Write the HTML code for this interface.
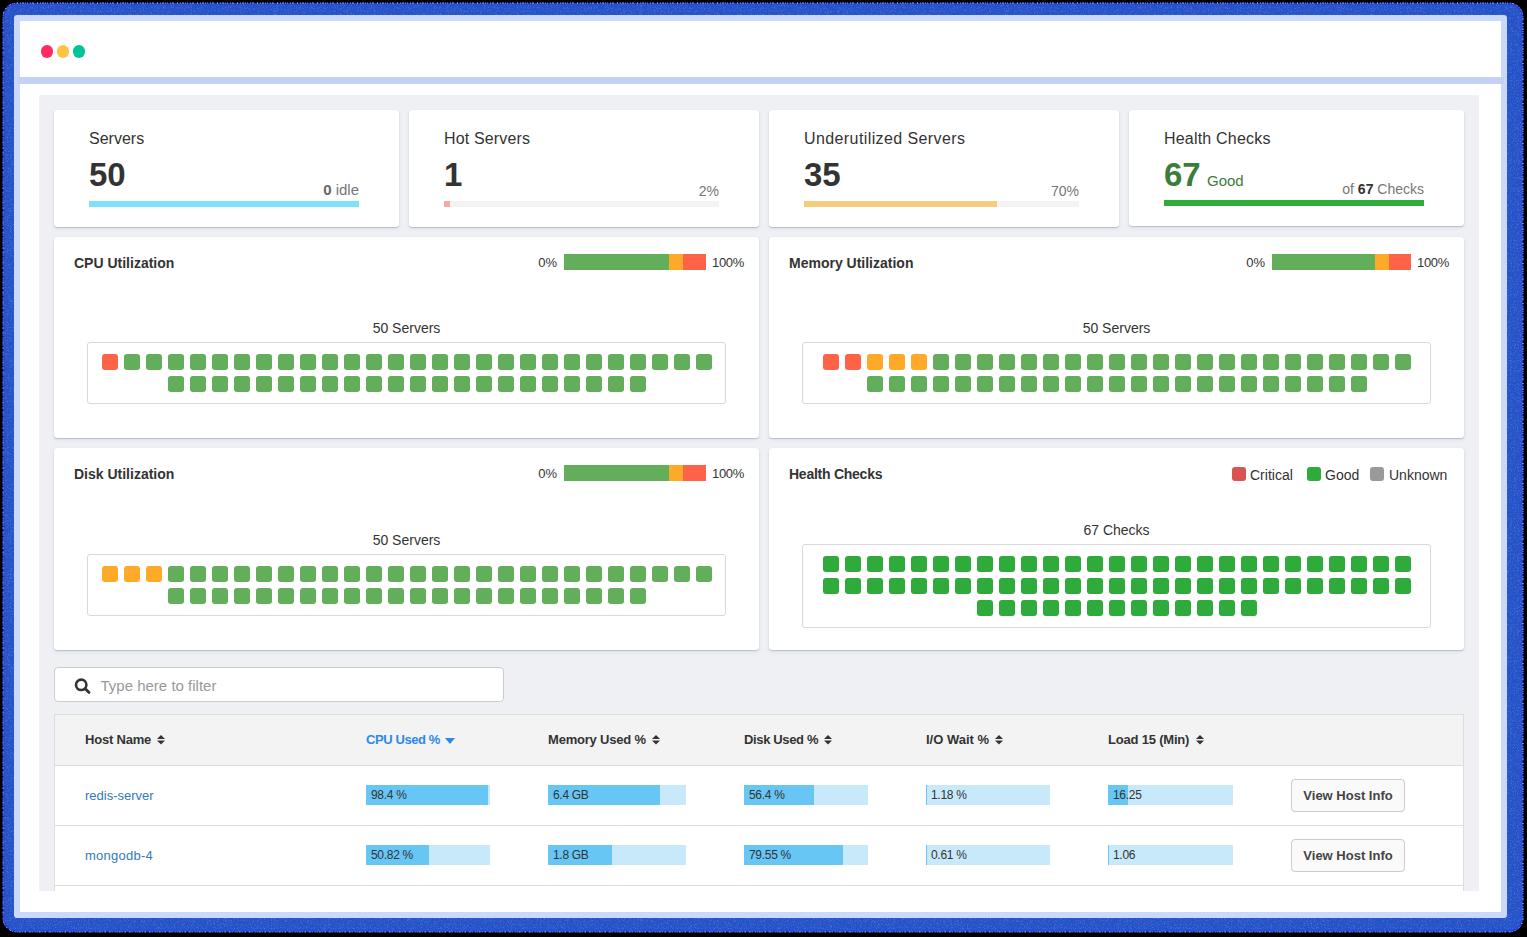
<!DOCTYPE html>
<html><head><meta charset="utf-8"><title>Dashboard</title>
<style>
html,body{margin:0;padding:0;width:1527px;height:937px;overflow:hidden;background:#000;}
body{position:relative;font-family:"Liberation Sans",sans-serif;}
.r,.t,i{position:absolute;}
.t{white-space:nowrap;line-height:1;}
.t b{font-weight:700;}
i{width:16px;height:16px;border-radius:3px;display:block;}
</style></head><body>
<svg class="r" style="left:0;top:0" width="1527" height="937" viewBox="0 0 1527 937"><defs><filter id="nz" x="0" y="0" width="100%" height="100%"><feTurbulence type="turbulence" baseFrequency="0.7" numOctaves="2" seed="7" result="n"/><feColorMatrix in="n" type="matrix" values="0 0 0 0 0.25  0 0 0 0 0.45  0 0 0 0 1  0 0 0 2.2 -0.5"/></filter><filter id="nz2" x="0" y="0" width="100%" height="100%"><feTurbulence type="turbulence" baseFrequency="0.8" numOctaves="2" seed="19" result="n"/><feColorMatrix in="n" type="matrix" values="0 0 0 0 0  0 0 0 0 0.12  0 0 0 0 0.7  0 0 0 2.2 -0.5"/></filter><clipPath id="fc"><rect x="3" y="3" width="1520" height="929" rx="14"/></clipPath></defs><rect x="3" y="3" width="1520" height="929" rx="14" fill="#2a50c6"/><g clip-path="url(#fc)"><rect x="0" y="0" width="1527" height="937" filter="url(#nz)" opacity="0.35"/><rect x="0" y="0" width="1527" height="937" filter="url(#nz2)" opacity="0.6"/></g><rect x="3.5" y="3.5" width="1519" height="928" rx="13.5" fill="none" stroke="#0a1aff" stroke-opacity="0.6" stroke-width="1.5"/><rect x="3" y="3" width="1520" height="929" rx="14" fill="none" stroke="#ffffff" stroke-opacity="0.6" stroke-width="1" stroke-dasharray="1 2 1 1 2 3"/><rect x="3" y="3" width="1520" height="929" rx="14" fill="none" stroke="#ffe600" stroke-opacity="0.7" stroke-width="1" stroke-dasharray="1 7 1 11"/></svg><div class="r" style="left:14px;top:15px;width:1493px;height:903px;background:#cad9f9;border-radius:3px"></div><div class="r" style="left:20px;top:21px;width:1481px;height:891px;background:#fff;"></div><div class="r" style="left:17px;top:77px;width:1487px;height:7px;background:#c3d1f5;"></div><div class="r" style="left:40.5px;top:45px;width:12px;height:12.5px;background:#ff2d5f;border-radius:50%"></div><div class="r" style="left:57px;top:45px;width:12px;height:12.5px;background:#fdc443;border-radius:50%"></div><div class="r" style="left:73px;top:45px;width:12px;height:12.5px;background:#00c497;border-radius:50%"></div><div class="r" style="left:39px;top:95px;width:1440px;height:796px;background:#eef0f3;"></div><div class="r" style="left:54px;top:110px;width:345px;height:117px;background:#fff;border-radius:3px;box-shadow:0 1px 1px rgba(30,40,110,.2),0 2px 4px rgba(30,40,110,.07),0 0 1px rgba(30,40,110,.08)"></div><div class="r" style="left:409px;top:110px;width:350px;height:117px;background:#fff;border-radius:3px;box-shadow:0 1px 1px rgba(30,40,110,.2),0 2px 4px rgba(30,40,110,.07),0 0 1px rgba(30,40,110,.08)"></div><div class="r" style="left:769px;top:110px;width:350px;height:117px;background:#fff;border-radius:3px;box-shadow:0 1px 1px rgba(30,40,110,.2),0 2px 4px rgba(30,40,110,.07),0 0 1px rgba(30,40,110,.08)"></div><div class="r" style="left:1129px;top:110px;width:335px;height:116px;background:#fff;border-radius:3px;box-shadow:0 1px 1px rgba(30,40,110,.2),0 2px 4px rgba(30,40,110,.07),0 0 1px rgba(30,40,110,.08)"></div><div class="t" style="left:89px;top:131px;font-size:16px;font-weight:400;color:#333;">Servers</div><div class="t" style="left:89px;top:158px;font-size:33px;font-weight:700;color:#333;">50</div><div class="t" style="right:1168px;top:182px;font-size:15px;font-weight:400;color:#777;"><b style="color:#666">0</b> idle</div><div class="r" style="left:89px;top:201px;width:270px;height:6px;background:#7fe1fa;"></div><div class="t" style="left:444px;top:131px;font-size:16px;font-weight:400;color:#333;letter-spacing:0.15px">Hot Servers</div><div class="t" style="left:444px;top:158px;font-size:33px;font-weight:700;color:#333;">1</div><div class="t" style="right:808px;top:184px;font-size:14px;font-weight:400;color:#777;">2%</div><div class="r" style="left:444px;top:201px;width:275px;height:6px;background:#f3f3f3;"></div><div class="r" style="left:444px;top:201px;width:6px;height:6px;background:#f5a9a9;"></div><div class="t" style="left:804px;top:131px;font-size:16px;font-weight:400;color:#333;letter-spacing:0.4px">Underutilized Servers</div><div class="t" style="left:804px;top:158px;font-size:33px;font-weight:700;color:#333;">35</div><div class="t" style="right:448px;top:184px;font-size:14px;font-weight:400;color:#777;">70%</div><div class="r" style="left:804px;top:201px;width:275px;height:6px;background:#f3f3f3;"></div><div class="r" style="left:804px;top:201px;width:193px;height:6px;background:#f6cd7f;"></div><div class="t" style="left:1164px;top:131px;font-size:16px;font-weight:400;color:#333;letter-spacing:0.2px">Health Checks</div><div class="t" style="left:1164px;top:158px;font-size:33px;font-weight:700;color:#3b7d3c;">67</div><div class="t" style="left:1207px;top:173px;font-size:15px;font-weight:400;color:#3b7d3c;">Good</div><div class="t" style="right:103px;top:182px;font-size:14px;font-weight:400;color:#777;">of <b style="color:#333">67</b> Checks</div><div class="r" style="left:1164px;top:200px;width:260px;height:6px;background:#2eab3a;"></div><div class="r" style="left:54px;top:237px;width:705px;height:201px;background:#fff;border-radius:3px;box-shadow:0 1px 1px rgba(30,40,110,.2),0 2px 4px rgba(30,40,110,.07),0 0 1px rgba(30,40,110,.08)"></div><div class="r" style="left:769px;top:237px;width:695px;height:201px;background:#fff;border-radius:3px;box-shadow:0 1px 1px rgba(30,40,110,.2),0 2px 4px rgba(30,40,110,.07),0 0 1px rgba(30,40,110,.08)"></div><div class="r" style="left:54px;top:448px;width:705px;height:202px;background:#fff;border-radius:3px;box-shadow:0 1px 1px rgba(30,40,110,.2),0 2px 4px rgba(30,40,110,.07),0 0 1px rgba(30,40,110,.08)"></div><div class="r" style="left:769px;top:448px;width:695px;height:202px;background:#fff;border-radius:3px;box-shadow:0 1px 1px rgba(30,40,110,.2),0 2px 4px rgba(30,40,110,.07),0 0 1px rgba(30,40,110,.08)"></div><div class="t" style="left:74px;top:256px;font-size:14px;font-weight:700;color:#333;">CPU Utilization</div><div class="t" style="right:970px;top:256px;font-size:13px;font-weight:400;color:#333;">0%</div><div class="r" style="left:564px;top:254px;width:105px;height:16px;background:#62ae5b;"></div><div class="r" style="left:669px;top:254px;width:14px;height:16px;background:#ffa929;"></div><div class="r" style="left:683px;top:254px;width:23px;height:16px;background:#ff6347;"></div><div class="t" style="left:712px;top:256px;font-size:13px;font-weight:400;color:#333;letter-spacing:-0.3px">100%</div><div class="t" style="left:206.5px;width:400px;text-align:center;top:321px;font-size:14px;font-weight:400;color:#333;">50 Servers</div><div class="r" style="left:87px;top:342px;width:639px;height:62px;background:#fff;border:1px solid #d9d9d9;border-radius:3px;box-sizing:border-box"></div><i style="left:102px;top:354px;background:#ff6347"></i><i style="left:124px;top:354px;background:#62ae5b"></i><i style="left:146px;top:354px;background:#62ae5b"></i><i style="left:168px;top:354px;background:#62ae5b"></i><i style="left:190px;top:354px;background:#62ae5b"></i><i style="left:212px;top:354px;background:#62ae5b"></i><i style="left:234px;top:354px;background:#62ae5b"></i><i style="left:256px;top:354px;background:#62ae5b"></i><i style="left:278px;top:354px;background:#62ae5b"></i><i style="left:300px;top:354px;background:#62ae5b"></i><i style="left:322px;top:354px;background:#62ae5b"></i><i style="left:344px;top:354px;background:#62ae5b"></i><i style="left:366px;top:354px;background:#62ae5b"></i><i style="left:388px;top:354px;background:#62ae5b"></i><i style="left:410px;top:354px;background:#62ae5b"></i><i style="left:432px;top:354px;background:#62ae5b"></i><i style="left:454px;top:354px;background:#62ae5b"></i><i style="left:476px;top:354px;background:#62ae5b"></i><i style="left:498px;top:354px;background:#62ae5b"></i><i style="left:520px;top:354px;background:#62ae5b"></i><i style="left:542px;top:354px;background:#62ae5b"></i><i style="left:564px;top:354px;background:#62ae5b"></i><i style="left:586px;top:354px;background:#62ae5b"></i><i style="left:608px;top:354px;background:#62ae5b"></i><i style="left:630px;top:354px;background:#62ae5b"></i><i style="left:652px;top:354px;background:#62ae5b"></i><i style="left:674px;top:354px;background:#62ae5b"></i><i style="left:696px;top:354px;background:#62ae5b"></i><i style="left:168px;top:376px;background:#62ae5b"></i><i style="left:190px;top:376px;background:#62ae5b"></i><i style="left:212px;top:376px;background:#62ae5b"></i><i style="left:234px;top:376px;background:#62ae5b"></i><i style="left:256px;top:376px;background:#62ae5b"></i><i style="left:278px;top:376px;background:#62ae5b"></i><i style="left:300px;top:376px;background:#62ae5b"></i><i style="left:322px;top:376px;background:#62ae5b"></i><i style="left:344px;top:376px;background:#62ae5b"></i><i style="left:366px;top:376px;background:#62ae5b"></i><i style="left:388px;top:376px;background:#62ae5b"></i><i style="left:410px;top:376px;background:#62ae5b"></i><i style="left:432px;top:376px;background:#62ae5b"></i><i style="left:454px;top:376px;background:#62ae5b"></i><i style="left:476px;top:376px;background:#62ae5b"></i><i style="left:498px;top:376px;background:#62ae5b"></i><i style="left:520px;top:376px;background:#62ae5b"></i><i style="left:542px;top:376px;background:#62ae5b"></i><i style="left:564px;top:376px;background:#62ae5b"></i><i style="left:586px;top:376px;background:#62ae5b"></i><i style="left:608px;top:376px;background:#62ae5b"></i><i style="left:630px;top:376px;background:#62ae5b"></i><div class="t" style="left:789px;top:256px;font-size:14px;font-weight:700;color:#333;">Memory Utilization</div><div class="t" style="right:262px;top:256px;font-size:13px;font-weight:400;color:#333;">0%</div><div class="r" style="left:1272px;top:254px;width:103px;height:16px;background:#62ae5b;"></div><div class="r" style="left:1375px;top:254px;width:14px;height:16px;background:#ffa929;"></div><div class="r" style="left:1389px;top:254px;width:22px;height:16px;background:#ff6347;"></div><div class="t" style="left:1417px;top:256px;font-size:13px;font-weight:400;color:#333;letter-spacing:-0.3px">100%</div><div class="t" style="left:916.5px;width:400px;text-align:center;top:321px;font-size:14px;font-weight:400;color:#333;">50 Servers</div><div class="r" style="left:802px;top:342px;width:629px;height:62px;background:#fff;border:1px solid #d9d9d9;border-radius:3px;box-sizing:border-box"></div><i style="left:823px;top:354px;background:#ff6347"></i><i style="left:845px;top:354px;background:#ff6347"></i><i style="left:867px;top:354px;background:#ffa929"></i><i style="left:889px;top:354px;background:#ffa929"></i><i style="left:911px;top:354px;background:#ffa929"></i><i style="left:933px;top:354px;background:#62ae5b"></i><i style="left:955px;top:354px;background:#62ae5b"></i><i style="left:977px;top:354px;background:#62ae5b"></i><i style="left:999px;top:354px;background:#62ae5b"></i><i style="left:1021px;top:354px;background:#62ae5b"></i><i style="left:1043px;top:354px;background:#62ae5b"></i><i style="left:1065px;top:354px;background:#62ae5b"></i><i style="left:1087px;top:354px;background:#62ae5b"></i><i style="left:1109px;top:354px;background:#62ae5b"></i><i style="left:1131px;top:354px;background:#62ae5b"></i><i style="left:1153px;top:354px;background:#62ae5b"></i><i style="left:1175px;top:354px;background:#62ae5b"></i><i style="left:1197px;top:354px;background:#62ae5b"></i><i style="left:1219px;top:354px;background:#62ae5b"></i><i style="left:1241px;top:354px;background:#62ae5b"></i><i style="left:1263px;top:354px;background:#62ae5b"></i><i style="left:1285px;top:354px;background:#62ae5b"></i><i style="left:1307px;top:354px;background:#62ae5b"></i><i style="left:1329px;top:354px;background:#62ae5b"></i><i style="left:1351px;top:354px;background:#62ae5b"></i><i style="left:1373px;top:354px;background:#62ae5b"></i><i style="left:1395px;top:354px;background:#62ae5b"></i><i style="left:867px;top:376px;background:#62ae5b"></i><i style="left:889px;top:376px;background:#62ae5b"></i><i style="left:911px;top:376px;background:#62ae5b"></i><i style="left:933px;top:376px;background:#62ae5b"></i><i style="left:955px;top:376px;background:#62ae5b"></i><i style="left:977px;top:376px;background:#62ae5b"></i><i style="left:999px;top:376px;background:#62ae5b"></i><i style="left:1021px;top:376px;background:#62ae5b"></i><i style="left:1043px;top:376px;background:#62ae5b"></i><i style="left:1065px;top:376px;background:#62ae5b"></i><i style="left:1087px;top:376px;background:#62ae5b"></i><i style="left:1109px;top:376px;background:#62ae5b"></i><i style="left:1131px;top:376px;background:#62ae5b"></i><i style="left:1153px;top:376px;background:#62ae5b"></i><i style="left:1175px;top:376px;background:#62ae5b"></i><i style="left:1197px;top:376px;background:#62ae5b"></i><i style="left:1219px;top:376px;background:#62ae5b"></i><i style="left:1241px;top:376px;background:#62ae5b"></i><i style="left:1263px;top:376px;background:#62ae5b"></i><i style="left:1285px;top:376px;background:#62ae5b"></i><i style="left:1307px;top:376px;background:#62ae5b"></i><i style="left:1329px;top:376px;background:#62ae5b"></i><i style="left:1351px;top:376px;background:#62ae5b"></i><div class="t" style="left:74px;top:467px;font-size:14px;font-weight:700;color:#333;">Disk Utilization</div><div class="t" style="right:970px;top:467px;font-size:13px;font-weight:400;color:#333;">0%</div><div class="r" style="left:564px;top:465px;width:105px;height:16px;background:#62ae5b;"></div><div class="r" style="left:669px;top:465px;width:14px;height:16px;background:#ffa929;"></div><div class="r" style="left:683px;top:465px;width:23px;height:16px;background:#ff6347;"></div><div class="t" style="left:712px;top:467px;font-size:13px;font-weight:400;color:#333;letter-spacing:-0.3px">100%</div><div class="t" style="left:206.5px;width:400px;text-align:center;top:533px;font-size:14px;font-weight:400;color:#333;">50 Servers</div><div class="r" style="left:87px;top:554px;width:639px;height:62px;background:#fff;border:1px solid #d9d9d9;border-radius:3px;box-sizing:border-box"></div><i style="left:102px;top:566px;background:#ffa929"></i><i style="left:124px;top:566px;background:#ffa929"></i><i style="left:146px;top:566px;background:#ffa929"></i><i style="left:168px;top:566px;background:#62ae5b"></i><i style="left:190px;top:566px;background:#62ae5b"></i><i style="left:212px;top:566px;background:#62ae5b"></i><i style="left:234px;top:566px;background:#62ae5b"></i><i style="left:256px;top:566px;background:#62ae5b"></i><i style="left:278px;top:566px;background:#62ae5b"></i><i style="left:300px;top:566px;background:#62ae5b"></i><i style="left:322px;top:566px;background:#62ae5b"></i><i style="left:344px;top:566px;background:#62ae5b"></i><i style="left:366px;top:566px;background:#62ae5b"></i><i style="left:388px;top:566px;background:#62ae5b"></i><i style="left:410px;top:566px;background:#62ae5b"></i><i style="left:432px;top:566px;background:#62ae5b"></i><i style="left:454px;top:566px;background:#62ae5b"></i><i style="left:476px;top:566px;background:#62ae5b"></i><i style="left:498px;top:566px;background:#62ae5b"></i><i style="left:520px;top:566px;background:#62ae5b"></i><i style="left:542px;top:566px;background:#62ae5b"></i><i style="left:564px;top:566px;background:#62ae5b"></i><i style="left:586px;top:566px;background:#62ae5b"></i><i style="left:608px;top:566px;background:#62ae5b"></i><i style="left:630px;top:566px;background:#62ae5b"></i><i style="left:652px;top:566px;background:#62ae5b"></i><i style="left:674px;top:566px;background:#62ae5b"></i><i style="left:696px;top:566px;background:#62ae5b"></i><i style="left:168px;top:588px;background:#62ae5b"></i><i style="left:190px;top:588px;background:#62ae5b"></i><i style="left:212px;top:588px;background:#62ae5b"></i><i style="left:234px;top:588px;background:#62ae5b"></i><i style="left:256px;top:588px;background:#62ae5b"></i><i style="left:278px;top:588px;background:#62ae5b"></i><i style="left:300px;top:588px;background:#62ae5b"></i><i style="left:322px;top:588px;background:#62ae5b"></i><i style="left:344px;top:588px;background:#62ae5b"></i><i style="left:366px;top:588px;background:#62ae5b"></i><i style="left:388px;top:588px;background:#62ae5b"></i><i style="left:410px;top:588px;background:#62ae5b"></i><i style="left:432px;top:588px;background:#62ae5b"></i><i style="left:454px;top:588px;background:#62ae5b"></i><i style="left:476px;top:588px;background:#62ae5b"></i><i style="left:498px;top:588px;background:#62ae5b"></i><i style="left:520px;top:588px;background:#62ae5b"></i><i style="left:542px;top:588px;background:#62ae5b"></i><i style="left:564px;top:588px;background:#62ae5b"></i><i style="left:586px;top:588px;background:#62ae5b"></i><i style="left:608px;top:588px;background:#62ae5b"></i><i style="left:630px;top:588px;background:#62ae5b"></i><div class="t" style="left:789px;top:467px;font-size:14px;font-weight:700;color:#333;letter-spacing:-0.25px">Health Checks</div><div class="r" style="left:1232px;top:467px;width:14px;height:14px;background:#d9534f;border-radius:3px"></div><div class="t" style="left:1250px;top:468px;font-size:14px;font-weight:400;color:#333;">Critical</div><div class="r" style="left:1307px;top:467px;width:14px;height:14px;background:#2eab3a;border-radius:3px"></div><div class="t" style="left:1325px;top:468px;font-size:14px;font-weight:400;color:#333;">Good</div><div class="r" style="left:1370px;top:467px;width:14px;height:14px;background:#999;border-radius:3px"></div><div class="t" style="left:1389px;top:468px;font-size:14px;font-weight:400;color:#333;">Unknown</div><div class="t" style="left:916.5px;width:400px;text-align:center;top:523px;font-size:14px;font-weight:400;color:#333;">67 Checks</div><div class="r" style="left:802px;top:544px;width:629px;height:84px;background:#fff;border:1px solid #d9d9d9;border-radius:3px;box-sizing:border-box"></div><i style="left:823px;top:556px;background:#2eab3a"></i><i style="left:845px;top:556px;background:#2eab3a"></i><i style="left:867px;top:556px;background:#2eab3a"></i><i style="left:889px;top:556px;background:#2eab3a"></i><i style="left:911px;top:556px;background:#2eab3a"></i><i style="left:933px;top:556px;background:#2eab3a"></i><i style="left:955px;top:556px;background:#2eab3a"></i><i style="left:977px;top:556px;background:#2eab3a"></i><i style="left:999px;top:556px;background:#2eab3a"></i><i style="left:1021px;top:556px;background:#2eab3a"></i><i style="left:1043px;top:556px;background:#2eab3a"></i><i style="left:1065px;top:556px;background:#2eab3a"></i><i style="left:1087px;top:556px;background:#2eab3a"></i><i style="left:1109px;top:556px;background:#2eab3a"></i><i style="left:1131px;top:556px;background:#2eab3a"></i><i style="left:1153px;top:556px;background:#2eab3a"></i><i style="left:1175px;top:556px;background:#2eab3a"></i><i style="left:1197px;top:556px;background:#2eab3a"></i><i style="left:1219px;top:556px;background:#2eab3a"></i><i style="left:1241px;top:556px;background:#2eab3a"></i><i style="left:1263px;top:556px;background:#2eab3a"></i><i style="left:1285px;top:556px;background:#2eab3a"></i><i style="left:1307px;top:556px;background:#2eab3a"></i><i style="left:1329px;top:556px;background:#2eab3a"></i><i style="left:1351px;top:556px;background:#2eab3a"></i><i style="left:1373px;top:556px;background:#2eab3a"></i><i style="left:1395px;top:556px;background:#2eab3a"></i><i style="left:823px;top:578px;background:#2eab3a"></i><i style="left:845px;top:578px;background:#2eab3a"></i><i style="left:867px;top:578px;background:#2eab3a"></i><i style="left:889px;top:578px;background:#2eab3a"></i><i style="left:911px;top:578px;background:#2eab3a"></i><i style="left:933px;top:578px;background:#2eab3a"></i><i style="left:955px;top:578px;background:#2eab3a"></i><i style="left:977px;top:578px;background:#2eab3a"></i><i style="left:999px;top:578px;background:#2eab3a"></i><i style="left:1021px;top:578px;background:#2eab3a"></i><i style="left:1043px;top:578px;background:#2eab3a"></i><i style="left:1065px;top:578px;background:#2eab3a"></i><i style="left:1087px;top:578px;background:#2eab3a"></i><i style="left:1109px;top:578px;background:#2eab3a"></i><i style="left:1131px;top:578px;background:#2eab3a"></i><i style="left:1153px;top:578px;background:#2eab3a"></i><i style="left:1175px;top:578px;background:#2eab3a"></i><i style="left:1197px;top:578px;background:#2eab3a"></i><i style="left:1219px;top:578px;background:#2eab3a"></i><i style="left:1241px;top:578px;background:#2eab3a"></i><i style="left:1263px;top:578px;background:#2eab3a"></i><i style="left:1285px;top:578px;background:#2eab3a"></i><i style="left:1307px;top:578px;background:#2eab3a"></i><i style="left:1329px;top:578px;background:#2eab3a"></i><i style="left:1351px;top:578px;background:#2eab3a"></i><i style="left:1373px;top:578px;background:#2eab3a"></i><i style="left:1395px;top:578px;background:#2eab3a"></i><i style="left:977px;top:600px;background:#2eab3a"></i><i style="left:999px;top:600px;background:#2eab3a"></i><i style="left:1021px;top:600px;background:#2eab3a"></i><i style="left:1043px;top:600px;background:#2eab3a"></i><i style="left:1065px;top:600px;background:#2eab3a"></i><i style="left:1087px;top:600px;background:#2eab3a"></i><i style="left:1109px;top:600px;background:#2eab3a"></i><i style="left:1131px;top:600px;background:#2eab3a"></i><i style="left:1153px;top:600px;background:#2eab3a"></i><i style="left:1175px;top:600px;background:#2eab3a"></i><i style="left:1197px;top:600px;background:#2eab3a"></i><i style="left:1219px;top:600px;background:#2eab3a"></i><i style="left:1241px;top:600px;background:#2eab3a"></i><div class="r" style="left:54px;top:667px;width:450px;height:35px;background:#fff;border:1px solid #ccc;border-radius:4px;box-sizing:border-box"></div><svg class="r" style="left:72px;top:677px" width="20" height="20" viewBox="0 0 20 20"><circle cx="9.2" cy="7.8" r="5.2" fill="none" stroke="#333" stroke-width="2.6"/><line x1="13" y1="11.6" x2="17" y2="15.6" stroke="#333" stroke-width="2.8" stroke-linecap="round"/></svg><div class="t" style="left:100.5px;top:678px;font-size:15px;font-weight:400;color:#999;">Type here to filter</div><div class="r" style="left:54px;top:714px;width:1410px;height:177px;background:#fff;border:1px solid #ddd;border-bottom:0;box-sizing:border-box"></div><div class="r" style="left:55px;top:715px;width:1408px;height:50px;background:#f3f3f3;"></div><div class="r" style="left:55px;top:765px;width:1408px;height:1px;background:#ddd;"></div><div class="r" style="left:55px;top:825px;width:1408px;height:1px;background:#ddd;"></div><div class="r" style="left:55px;top:885px;width:1408px;height:1px;background:#ddd;"></div><div class="t" style="left:85px;top:733px;font-size:13px;font-weight:700;color:#333;letter-spacing:-0.2px">Host Name</div><svg class="r" style="left:157px;top:734.5px" width="8" height="10" viewBox="0 0 8 10"><path d="M4 0 L8 4 L0 4 Z M0 5.5 L8 5.5 L4 9.5 Z" fill="#333"/></svg><div class="t" style="left:548px;top:733px;font-size:13px;font-weight:700;color:#333;letter-spacing:-0.2px">Memory Used %</div><svg class="r" style="left:652px;top:734.5px" width="8" height="10" viewBox="0 0 8 10"><path d="M4 0 L8 4 L0 4 Z M0 5.5 L8 5.5 L4 9.5 Z" fill="#333"/></svg><div class="t" style="left:744px;top:733px;font-size:13px;font-weight:700;color:#333;letter-spacing:-0.35px">Disk Used %</div><svg class="r" style="left:824px;top:734.5px" width="8" height="10" viewBox="0 0 8 10"><path d="M4 0 L8 4 L0 4 Z M0 5.5 L8 5.5 L4 9.5 Z" fill="#333"/></svg><div class="t" style="left:926px;top:733px;font-size:13px;font-weight:700;color:#333;letter-spacing:0px">I/O Wait %</div><svg class="r" style="left:995px;top:734.5px" width="8" height="10" viewBox="0 0 8 10"><path d="M4 0 L8 4 L0 4 Z M0 5.5 L8 5.5 L4 9.5 Z" fill="#333"/></svg><div class="t" style="left:1108px;top:733px;font-size:13px;font-weight:700;color:#333;letter-spacing:-0.2px">Load 15 (Min)</div><svg class="r" style="left:1196px;top:734.5px" width="8" height="10" viewBox="0 0 8 10"><path d="M4 0 L8 4 L0 4 Z M0 5.5 L8 5.5 L4 9.5 Z" fill="#333"/></svg><div class="t" style="left:366px;top:733px;font-size:13px;font-weight:700;color:#2b8ae6;letter-spacing:-0.4px">CPU Used %</div><svg class="r" style="left:445px;top:738px" width="10" height="6" viewBox="0 0 10 6"><path d="M0 0 L10 0 L5 6 Z" fill="#2b8ae6"/></svg><div class="t" style="left:85px;top:789px;font-size:13px;font-weight:400;color:#337ab7;">redis-server</div><div class="r" style="left:366px;top:785px;width:124px;height:20px;background:#c8e9fa;"></div><div class="r" style="left:366px;top:785px;width:122px;height:20px;background:#67c6f3;"></div><div class="t" style="left:371px;top:789px;font-size:12px;font-weight:400;color:#333;letter-spacing:-0.3px">98.4 %</div><div class="r" style="left:548px;top:785px;width:138px;height:20px;background:#c8e9fa;"></div><div class="r" style="left:548px;top:785px;width:112px;height:20px;background:#67c6f3;"></div><div class="t" style="left:553px;top:789px;font-size:12px;font-weight:400;color:#333;letter-spacing:-0.3px">6.4 GB</div><div class="r" style="left:744px;top:785px;width:124px;height:20px;background:#c8e9fa;"></div><div class="r" style="left:744px;top:785px;width:70px;height:20px;background:#67c6f3;"></div><div class="t" style="left:749px;top:789px;font-size:12px;font-weight:400;color:#333;letter-spacing:-0.3px">56.4 %</div><div class="r" style="left:926px;top:785px;width:124px;height:20px;background:#c8e9fa;"></div><div class="r" style="left:926px;top:785px;width:1px;height:20px;background:#67c6f3;"></div><div class="t" style="left:931px;top:789px;font-size:12px;font-weight:400;color:#333;letter-spacing:-0.3px">1.18 %</div><div class="r" style="left:1108px;top:785px;width:125px;height:20px;background:#c8e9fa;"></div><div class="r" style="left:1108px;top:785px;width:20px;height:20px;background:#67c6f3;"></div><div class="t" style="left:1113px;top:789px;font-size:12px;font-weight:400;color:#333;letter-spacing:-0.3px">16.25</div><div class="r" style="left:1291px;top:779px;width:114px;height:33px;background:#fafafa;border:1px solid #ccc;border-radius:4px;box-sizing:border-box"></div><div class="t" style="left:1148px;width:400px;text-align:center;top:789px;font-size:13px;font-weight:700;color:#444;">View Host Info</div><div class="t" style="left:85px;top:849px;font-size:13px;font-weight:400;color:#337ab7;letter-spacing:0.25px">mongodb-4</div><div class="r" style="left:366px;top:845px;width:124px;height:20px;background:#c8e9fa;"></div><div class="r" style="left:366px;top:845px;width:63px;height:20px;background:#67c6f3;"></div><div class="t" style="left:371px;top:849px;font-size:12px;font-weight:400;color:#333;letter-spacing:-0.3px">50.82 %</div><div class="r" style="left:548px;top:845px;width:138px;height:20px;background:#c8e9fa;"></div><div class="r" style="left:548px;top:845px;width:64px;height:20px;background:#67c6f3;"></div><div class="t" style="left:553px;top:849px;font-size:12px;font-weight:400;color:#333;letter-spacing:-0.3px">1.8 GB</div><div class="r" style="left:744px;top:845px;width:124px;height:20px;background:#c8e9fa;"></div><div class="r" style="left:744px;top:845px;width:99px;height:20px;background:#67c6f3;"></div><div class="t" style="left:749px;top:849px;font-size:12px;font-weight:400;color:#333;letter-spacing:-0.3px">79.55 %</div><div class="r" style="left:926px;top:845px;width:124px;height:20px;background:#c8e9fa;"></div><div class="r" style="left:926px;top:845px;width:1px;height:20px;background:#67c6f3;"></div><div class="t" style="left:931px;top:849px;font-size:12px;font-weight:400;color:#333;letter-spacing:-0.3px">0.61 %</div><div class="r" style="left:1108px;top:845px;width:125px;height:20px;background:#c8e9fa;"></div><div class="r" style="left:1108px;top:845px;width:1px;height:20px;background:#67c6f3;"></div><div class="t" style="left:1113px;top:849px;font-size:12px;font-weight:400;color:#333;letter-spacing:-0.3px">1.06</div><div class="r" style="left:1291px;top:839px;width:114px;height:33px;background:#fafafa;border:1px solid #ccc;border-radius:4px;box-sizing:border-box"></div><div class="t" style="left:1148px;width:400px;text-align:center;top:849px;font-size:13px;font-weight:700;color:#444;">View Host Info</div>
</body></html>
